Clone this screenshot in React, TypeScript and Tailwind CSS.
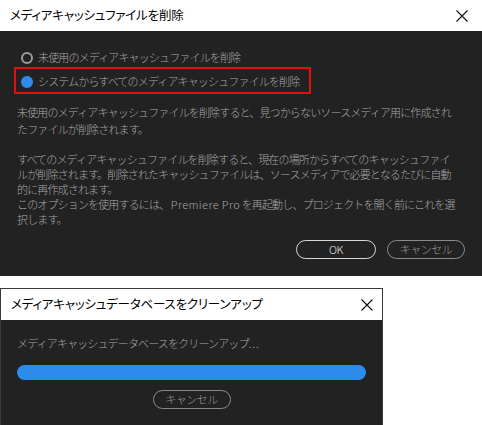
const jp = "font-['Noto_Sans_CJK_JP',sans-serif]";

const CloseIcon = () => (
  <svg width="12" height="12" viewBox="0 0 12 12" className="block">
    <path d="M0.5 0.5 L11.5 11.5 M11.5 0.5 L0.5 11.5" stroke="#111" strokeWidth="1.1" />
  </svg>
);

const TitleBar = ({ title, closeRight }: { title: string; closeRight: string }) => (
  <div className="flex h-[31px] shrink-0 items-center justify-between bg-white pl-[10px]">
    <span className="text-[12.5px] text-black [font-feature-settings:'palt'] tracking-[-0.2px]">{title}</span>
    <span className={closeRight}>
      <CloseIcon />
    </span>
  </div>
);

const PillButton = ({ label, strong }: { label: string; strong?: boolean }) => (
  <button
    className={`flex h-[19px] items-center justify-center rounded-full border text-[11px] font-light tracking-[-0.5px] ${
      strong ? "w-[80px] border-[#d8d8d8] text-[#e6e6e6]" : "w-[78px] border-[#8a8a8a] text-[#9a9a9a]"
    }`}
  >
    {label}
  </button>
);

// 英字と記号は詰めずに表示する
const Loose = ({ children }: { children: string }) => (
  <span className="tracking-[0.4px]">{children}</span>
);

export default function App() {
  return (
    <div className={`flex h-[425px] w-[482px] flex-col bg-white ${jp}`}>
      {/* キャッシュ削除ダイアログ */}
      <div className="flex h-[276px] shrink-0 flex-col bg-[#222222]">
        <TitleBar title="メディアキャッシュファイルを削除" closeRight="pr-[14px]" />
        <div className="flex flex-1 flex-col text-[11px] font-light tracking-[-0.85px] text-[#a6a6a6]">
          <div className="mt-[17px] flex h-[19px] items-center pl-[21px]">
            <span className="h-[12px] w-[12px] rounded-full border-2 border-[#9c9c9c]" />
            <span className="ml-[5px]">未使用のメディアキャッシュファイルを削除</span>
          </div>
          <div className="ml-[14px] flex h-[27px] w-[297px] items-center border-2 border-[#e01010] pl-[5px] pt-[2px]">
            <span className="h-[12px] w-[12px] rounded-full bg-[#2d8ceb]" />
            <span className="ml-[5px]">システムからすべてのメディアキャッシュファイルを削除</span>
          </div>
          <p className="mt-[10px] pl-[17px] leading-[17px]">
            未使用のメディアキャッシュファイルを削除すると、見つからないソースメディア用に作成され
            <br />
            たファイルが削除されます。
          </p>
          <p className="mt-[14px] pl-[17px] leading-[15px]">
            すべてのメディアキャッシュファイルを削除すると、現在の場所からすべてのキャッシュファイ
            <br />
            ルが削除されます。削除されたキャッシュファイルは、ソースメディアで必要となるたびに自動
            <br />
            的に再作成されます。
            <br />
            このオプションを使用するには、 <Loose>Premiere Pro</Loose> を再起動し、プロジェクトを開く前にこれを選
            <br />
            択します。
          </p>
          <div className="mt-[13px] flex justify-end gap-[11px] pr-[17px]">
            <PillButton label="OK" strong />
            <PillButton label="キャンセル" />
          </div>
        </div>
      </div>

      {/* データベースのクリーンアップ進行状況 */}
      <div className="mt-[12px] flex h-[137px] w-[383px] shrink-0 flex-col border border-b-0 border-[#3a3a3a] bg-[#222222]">
        <TitleBar title="メディアキャッシュデータベースをクリーンアップ" closeRight="pr-[9px]" />
        <div className="flex flex-1 flex-col px-[16px] text-[11px] font-light tracking-[-0.85px] text-[#a6a6a6]">
          <p className="mt-[16px] leading-[15px]">
            メディアキャッシュデータベースをクリーンアップ<span className="tracking-[1px]">...</span>
          </p>
          <div className="mt-[14px] h-[15px] w-full rounded-full bg-[#2d8ceb]" />
          <div className="mt-[10px] flex justify-center">
            <PillButton label="キャンセル" />
          </div>
        </div>
      </div>
    </div>
  );
}
